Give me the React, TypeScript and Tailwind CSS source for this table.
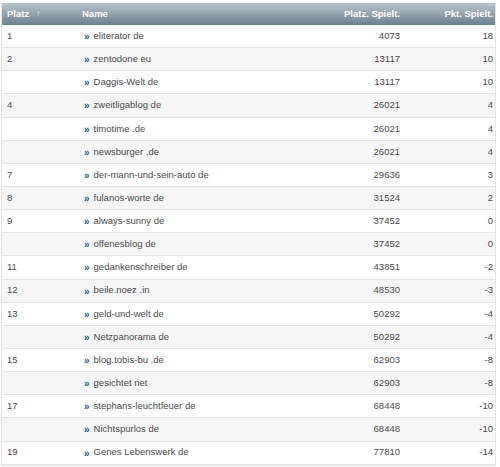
import React from 'react';

type Row = { platz: string; name: string; spiele: number; punkte: number };

const rows: Row[] = [
  { platz: '1', name: 'eliterator de', spiele: 4073, punkte: 18 },
  { platz: '2', name: 'zentodone eu', spiele: 13117, punkte: 10 },
  { platz: '', name: 'Daggis-Welt de', spiele: 13117, punkte: 10 },
  { platz: '4', name: 'zweitligablog de', spiele: 26021, punkte: 4 },
  { platz: '', name: 'timotime .de', spiele: 26021, punkte: 4 },
  { platz: '', name: 'newsburger .de', spiele: 26021, punkte: 4 },
  { platz: '7', name: 'der-mann-und-sein-auto de', spiele: 29636, punkte: 3 },
  { platz: '8', name: 'fulanos-worte de', spiele: 31524, punkte: 2 },
  { platz: '9', name: 'always-sunny de', spiele: 37452, punkte: 0 },
  { platz: '', name: 'offenesblog de', spiele: 37452, punkte: 0 },
  { platz: '11', name: 'gedankenschreiber de', spiele: 43851, punkte: -2 },
  { platz: '12', name: 'beile.noez .in', spiele: 48530, punkte: -3 },
  { platz: '13', name: 'geld-und-welt de', spiele: 50292, punkte: -4 },
  { platz: '', name: 'Netzpanorama de', spiele: 50292, punkte: -4 },
  { platz: '15', name: 'blog.tobis-bu .de', spiele: 62903, punkte: -8 },
  { platz: '', name: 'gesichtet net', spiele: 62903, punkte: -8 },
  { platz: '17', name: 'stephans-leuchtfeuer de', spiele: 68448, punkte: -10 },
  { platz: '', name: 'Nichtspurlos de', spiele: 68448, punkte: -10 },
  { platz: '19', name: 'Genes Lebenswerk de', spiele: 77810, punkte: -14 },
];

export default function App() {
  return (
    <div
      className="w-[500px] h-[467px] bg-white pt-[3px] pl-[1px] text-[9.5px] text-[#4a4a4a]"
      style={{ fontFamily: '"Liberation Sans", Arial, sans-serif' }}
    >
      <div className="w-[495px] border border-t-0 border-[#e4e4e4]">
        {/* header */}
        <div className="flex h-[22px] items-center bg-gradient-to-b from-[#b9c5cd] to-[#6c808e] font-bold text-white">
          <div className="w-[80px] pl-[5px] flex items-center gap-[7px]">
            Platz
            <span className="text-[8px] text-[#dde4e8] leading-none">↑</span>
          </div>
          <div className="flex-1">Name</div>
          <div className="w-[100px] text-right">Platz. Spielt.</div>
          <div className="w-[95px] pr-[2px] text-right">Pkt. Spielt.</div>
        </div>
        {rows.map((r, i) => (
          <div
            key={i}
            className={`flex h-[23.15px] items-center border-b border-[#e6e6e6] ${i % 2 === 1 ? 'bg-[#f6f6f6]' : 'bg-white'}`}
          >
            <div className="w-[80px] pl-[5px]">{r.platz}</div>
            <div className="flex-1 flex items-center">
              <span className="text-[#2b5a8c] font-bold text-[10px] leading-none mr-[4px] ml-[2px] mt-[2px]">»</span>
              {r.name}
            </div>
            <div className="w-[100px] text-right">{r.spiele}</div>
            <div className="w-[95px] pr-[2px] text-right">{r.punkte}</div>
          </div>
        ))}
      </div>
    </div>
  );
}
